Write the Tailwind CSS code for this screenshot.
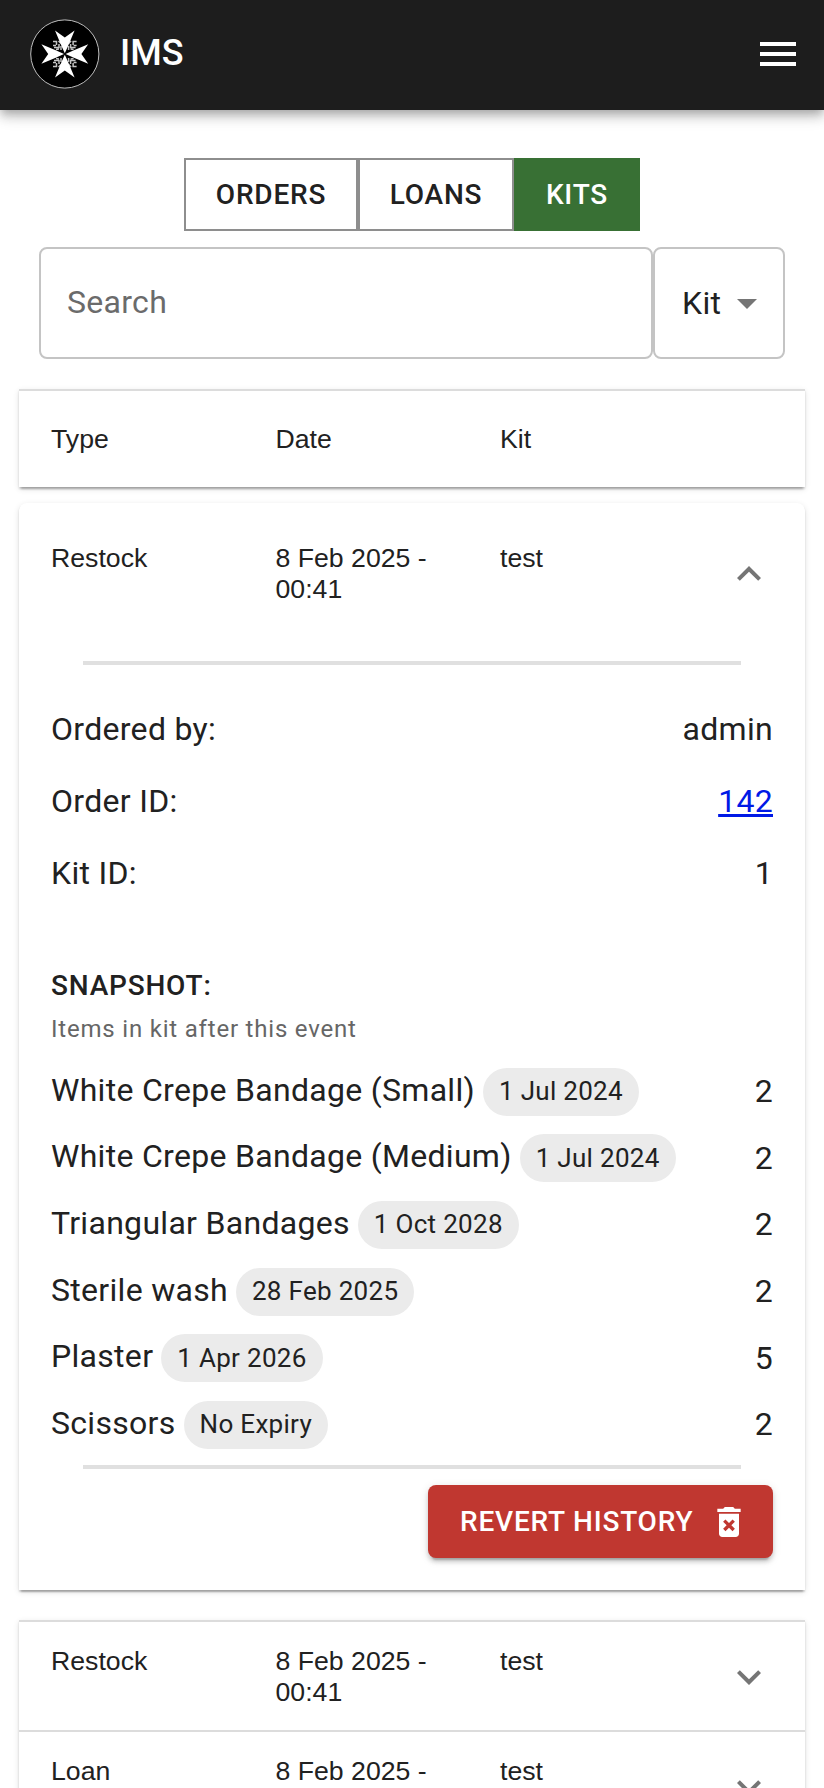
<!DOCTYPE html>
<html lang="en">
<head>
<meta charset="utf-8">
<title>IMS</title>
<script src="https://cdn.jsdelivr.net/npm/@tailwindcss/browser@4"></script>
</head>
<body class="h-[1788px] w-[824px] overflow-hidden bg-white font-['Roboto',sans-serif] text-[32px] text-[#212121]">
<header class="flex h-[110px] items-center bg-[#1d1d1d] pr-[22px] pl-[30px] text-white shadow-[0_4px_8px_-2px_rgba(0,0,0,0.2),0_8px_10px_0_rgba(0,0,0,0.14),0_2px_20px_0_rgba(0,0,0,0.12)]">
  <svg class="-mt-0.5 size-[70px]" viewBox="0 0 70 70">
    <circle cx="34.8" cy="35" r="34.1" fill="#000" stroke="#bdbdbd" stroke-width="1"/>
    <g fill="none" stroke="#c4c4c4" stroke-width="1.5">
      <g id="q"><path d="M23 22.500h3.500v3.500M23 26.500h3M28.500 22l2.500 2.500M29 25v3.500h-5M31 27v4M26 30.500l3-.5"/></g>
      <use href="#q" transform="matrix(-1 0 0 1 69.600 0)"/>
      <use href="#q" transform="matrix(1 0 0 -1 0 70)"/>
      <use href="#q" transform="matrix(-1 0 0 -1 69.600 70)"/>
    </g>
    <g fill="#fff">
      <g id="arm"><path d="M34.800 34.200 31.300 26.500 25 11.600l9.800 6.800 9.800-6.800L38.300 26.500z"/></g>
      <use href="#arm" transform="rotate(90 34.800 35)"/>
      <use href="#arm" transform="rotate(180 34.800 35)"/>
      <use href="#arm" transform="rotate(270 34.800 35)"/>
    </g>
  </svg>
  <div class="ml-5 grow pb-1 text-[36px] leading-[48px] font-medium">IMS</div>
  <svg class="-mt-0.5 size-12" viewBox="0 0 24 24" fill="#fff"><path d="M3 18h18v-2H3zm0-5h18v-2H3zm0-7v2h18V6z"/></svg>
</header>

<nav class="mt-12 ml-[184px] flex h-[73px] text-[28px] leading-[49px] font-medium tracking-[0.8px]">
  <div class="flex w-[174px] items-center justify-center border-2 border-[#8e8e8e]">ORDERS</div>
  <div class="flex w-[156px] items-center justify-center border-2 border-[#8e8e8e]">LOANS</div>
  <div class="flex w-[126px] items-center justify-center bg-[#387034] text-white">KITS</div>
</nav>

<div class="mt-4 ml-[39px] flex h-[112px] w-[746px]">
  <div class="flex w-[614px] items-center rounded-lg border-2 border-[#c4c4c4] pb-0.5 pl-[26px] tracking-[0.3px] text-[#6b6b6b]">Search</div>
  <div class="flex w-[132px] items-center rounded-lg border-2 border-[#c4c4c4] pl-[27px] tracking-[0.3px]">Kit
    <svg class="ml-0.5 size-12" viewBox="0 0 24 24" fill="#757575"><path d="m7 10 5 5 5-5z"/></svg>
  </div>
</div>

<main class="mx-[19px] mt-[30px]">
  <section class="border-t-2 border-[#dcdcdc] shadow-[0_4px_2px_-2px_rgba(0,0,0,0.2),0_2px_2px_0_rgba(0,0,0,0.14),0_2px_6px_0_rgba(0,0,0,0.12)]">
    <div class="flex h-24 items-center bg-white pl-8 font-['Liberation_Sans',sans-serif] text-[26.67px] leading-[31px]">
      <div class="w-[224.500px]">Type</div><div class="w-[224.500px]">Date</div><div>Kit</div>
    </div>
  </section>

  <section class="mt-4 h-[1087px] rounded-t-lg bg-white px-8 shadow-[0_4px_2px_-2px_rgba(0,0,0,0.2),0_2px_2px_0_rgba(0,0,0,0.14),0_2px_6px_0_rgba(0,0,0,0.12)]">
    <div class="flex h-[158px] pt-10 font-['Liberation_Sans',sans-serif] text-[26.67px] leading-[31px]">
      <div class="w-[224.500px]">Restock</div><div class="w-[224.500px]">8 Feb 2025 -<br>00:41</div><div class="grow">test</div>
      <svg class="mt-[7px] size-12 rotate-180" viewBox="0 0 24 24" fill="#757575"><path d="M16.590 8.590 12 13.170 7.410 8.590 6 10l6 6 6-6z"/></svg>
    </div>
    <div class="mx-8 h-1 bg-[#e0e0e0]"></div>
    <div class="mt-7 leading-[72px] tracking-[0.3px]">
      <div class="flex justify-between"><span>Ordered by:</span><span>admin</span></div>
      <div class="flex justify-between"><span>Order ID:</span><a class="text-[#0019e6] underline decoration-[3px]">142</a></div>
      <div class="flex justify-between"><span>Kit ID:</span><span>1</span></div>
    </div>
    <div class="mt-[53px] text-[28px] leading-[48px] font-medium tracking-[0.8px]">SNAPSHOT:</div>
    <div class="-mt-px text-[24px] leading-[40px] tracking-[0.8px] text-[#666]">Items in kit after this event</div>
    <div class="mt-[9.500px] grid auto-rows-[66.600px] tracking-[0.3px]">
      <div class="flex items-center"><span class="pb-1">White Crepe Bandage (Small)</span><span class="ml-2 flex h-12 items-center rounded-full bg-[#ebebeb] px-4 text-[26px]">1 Jul 2024</span><span class="ml-auto pb-px">2</span></div>
      <div class="flex items-center"><span class="pb-1">White Crepe Bandage (Medium)</span><span class="ml-2 flex h-12 items-center rounded-full bg-[#ebebeb] px-4 text-[26px]">1 Jul 2024</span><span class="ml-auto pb-px">2</span></div>
      <div class="flex items-center"><span class="pb-1">Triangular Bandages</span><span class="ml-2 flex h-12 items-center rounded-full bg-[#ebebeb] px-4 text-[26px]">1 Oct 2028</span><span class="ml-auto pb-px">2</span></div>
      <div class="flex items-center"><span class="pb-1">Sterile wash</span><span class="ml-2 flex h-12 items-center rounded-full bg-[#ebebeb] px-4 text-[26px]">28 Feb 2025</span><span class="ml-auto pb-px">2</span></div>
      <div class="flex items-center"><span class="pb-1">Plaster</span><span class="ml-2 flex h-12 items-center rounded-full bg-[#ebebeb] px-4 text-[26px]">1 Apr 2026</span><span class="ml-auto pb-px">5</span></div>
      <div class="flex items-center"><span class="pb-1">Scissors</span><span class="ml-2 flex h-12 items-center rounded-full bg-[#ebebeb] px-4 text-[26px]">No Expiry</span><span class="ml-auto pb-px">2</span></div>
    </div>
    <div class="mx-8 mt-[6.900px] h-1 bg-[#e0e0e0]"></div>
    <div class="mt-4 ml-auto flex h-[73px] w-[345px] items-center rounded-lg bg-[#c03730] pl-8 text-[28px] font-medium tracking-[0.8px] text-white shadow-[0_6px_2px_-4px_rgba(0,0,0,0.2),0_4px_4px_0_rgba(0,0,0,0.14),0_2px_10px_0_rgba(0,0,0,0.12)]">
      <span class="w-[249px] pt-px whitespace-nowrap">REVERT HISTORY</span>
      <svg class="mt-px size-10" viewBox="0 0 24 24" fill="#fff"><path d="M6 19c0 1.100.9 2 2 2h8c1.100 0 2-.9 2-2V7H6zm2.460-7.120 1.410-1.410L12 12.590l2.120-2.120 1.410 1.410L13.410 14l2.120 2.120-1.410 1.410L12 15.410l-2.120 2.120-1.410-1.410L10.590 14zM15.500 4l-1-1h-5l-1 1H5v2h14V4z"/></svg>
    </div>
  </section>

  <section class="mt-[30px] font-['Liberation_Sans',sans-serif] text-[26.67px] leading-[31px] shadow-[0_4px_2px_-2px_rgba(0,0,0,0.2),0_2px_2px_0_rgba(0,0,0,0.14),0_2px_6px_0_rgba(0,0,0,0.12)]">
    <div class="flex h-[110px] border-t-2 border-[#dcdcdc] bg-white px-8 pt-6">
      <div class="w-[224.500px]">Restock</div><div class="w-[224.500px]">8 Feb 2025 -<br>00:41</div><div class="grow">test</div>
      <svg class="mt-[7px] size-12" viewBox="0 0 24 24" fill="#757575"><path d="M16.590 8.590 12 13.170 7.410 8.590 6 10l6 6 6-6z"/></svg>
    </div>
    <div class="flex h-[110px] border-t-2 border-[#dcdcdc] bg-white px-8 pt-6">
      <div class="w-[224.500px]">Loan</div><div class="w-[224.500px]">8 Feb 2025 -</div><div class="grow">test</div>
      <svg class="mt-[7px] size-12" viewBox="0 0 24 24" fill="#757575"><path d="M16.590 8.590 12 13.170 7.410 8.590 6 10l6 6 6-6z"/></svg>
    </div>
  </section>
</main>
</body>
</html>
